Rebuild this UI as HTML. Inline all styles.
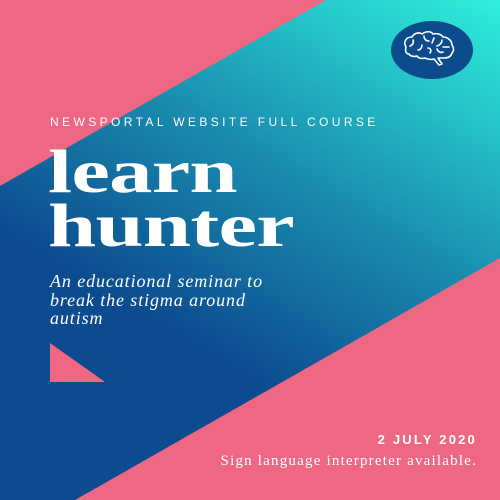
<!DOCTYPE html>
<html><head><style>
html,body{margin:0;padding:0}
body{width:500px;height:500px;position:relative;overflow:hidden;background:#ee6883;font-family:"Liberation Sans",sans-serif}
.a{position:absolute;color:#fff;white-space:nowrap}
</style></head><body>
<svg width="500" height="500" style="position:absolute;left:0;top:0">
<defs><linearGradient id="g" x1="270" y1="390" x2="500" y2="0" gradientUnits="userSpaceOnUse">
<stop offset="0" stop-color="#0c4b8f"/><stop offset="0.45" stop-color="#1a8fb0"/><stop offset="1" stop-color="#2ef0dc"/></linearGradient></defs>
<polygon points="0,186 326,0 500,0 500,258 75,500 0,500" fill="url(#g)"/>
<ellipse cx="432" cy="50" rx="41" ry="29" fill="#0c4b8c"/>
<g fill="none" stroke="#fff" stroke-width="1.6" stroke-linecap="round" stroke-linejoin="round">
<path d="M406 47c-3-5 0-10 6-10 2-4 7-5 10-3 4-3 9-3 11 0 4-1 8 0 10 3 5 0 9 4 9 8 2 3 2 6 0 8-1 4-5 5-8 5h-6l4 6-3 1-5-6c-3 1-7 0-9-1-4 1-7 0-8-2-4 1-7 0-8-2-3 0-4-3-3-7z"/>
<path d="M413 40c1 2 0 5-3 6M424 36c0 3 2 5 5 5M434 38l-2 5M442 40c0 3-2 5-5 6M449 47h-6M418 50c2 0 4-2 4-5M428 48c2 0 4 2 2 5M437 49c1 3 4 4 6 3"/>
</g>
</svg>
<div class="a" style="left:50px;top:115px;font-size:12px;letter-spacing:3.4px;">NEWSPORTAL WEBSITE FULL COURSE</div>
<div class="a" style="left:48px;top:146px;font-family:'Liberation Serif',serif;font-weight:bold;font-size:61px;line-height:54px;transform:scaleX(1.42);transform-origin:0 0;letter-spacing:-0.5px">learn<br>hunter</div>
<div class="a" style="left:50px;top:272px;font-family:'Liberation Serif',serif;font-style:italic;font-size:18px;line-height:18.5px;letter-spacing:0.9px">An educational seminar to<br>break the stigma around<br>autism</div>
<svg width="500" height="500" style="position:absolute;left:0;top:0"><polygon points="50,343 50,382 105,382" fill="#ee6883"/></svg>
<div class="a" style="right:23px;top:432px;font-size:13px;font-weight:bold;letter-spacing:2.2px">2 JULY 2020</div>
<div class="a" style="right:23px;top:453px;font-family:'Liberation Serif',serif;font-size:15px;letter-spacing:1.2px">Sign language interpreter available.</div>
</body></html>
